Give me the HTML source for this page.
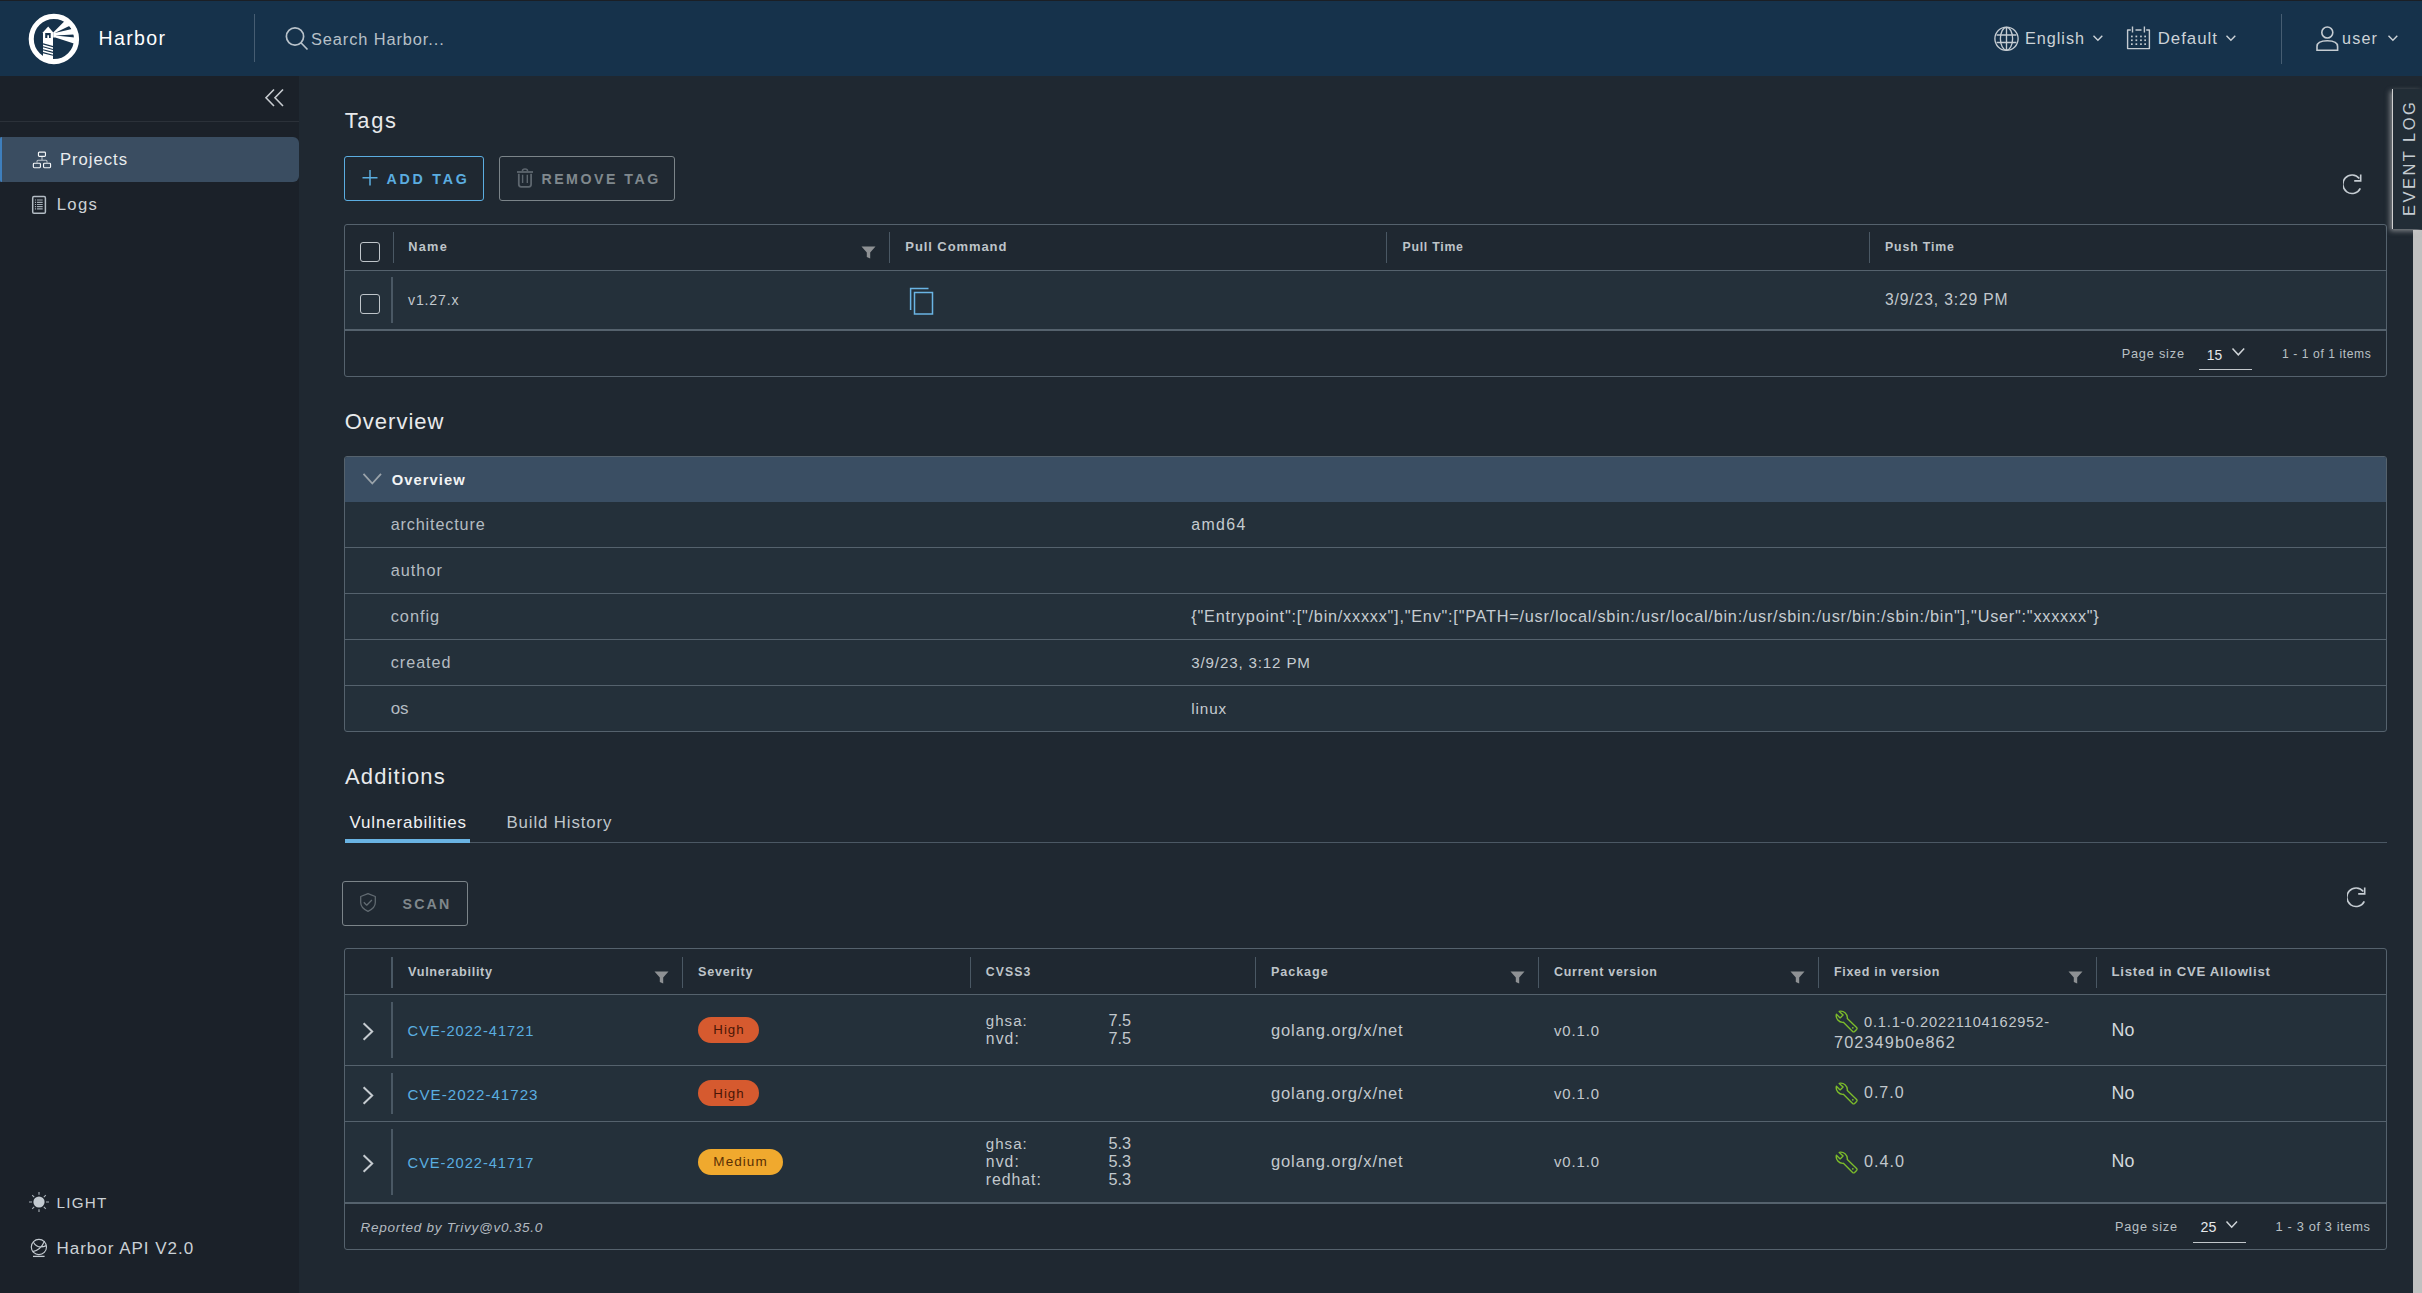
<!DOCTYPE html>
<html><head><meta charset="utf-8"><style>
html,body{margin:0;padding:0;width:2422px;height:1293px;overflow:hidden;background:#1f2831;}
body{position:relative;font-family:"Liberation Sans",sans-serif;}
.t{position:absolute;white-space:nowrap;line-height:1;}
.r{position:absolute;}
</style></head><body>
<div class="r" style="left:0px;top:0px;width:2422px;height:1293px;background:#1f2831"></div>
<div class="r" style="left:0px;top:0px;width:2422px;height:1px;background:#1b1f25"></div>
<div class="r" style="left:0px;top:1px;width:2422px;height:75px;background:#16324b"></div>
<div class="r" style="left:0px;top:76px;width:299px;height:1217px;background:#1b2129"></div>
<svg class="r" style="left:28px;top:13px;" width="52" height="52" viewBox="0 0 52 52"><defs><clipPath id="lc"><circle cx="25.9" cy="26" r="23"/></clipPath></defs>
<g clip-path="url(#lc)">
<path d="M25.2 19.5 L46.1 -1.4 L72 -1 L64.5 36.3 L27.3 24.5 L25.2 24.5 Z" fill="#fff"/>
<path d="M26.7 20 L41.3 12.9 L43.9 16 Z" fill="#16324b"/>
<path d="M27.3 22.6 L45.6 21.5 L46.7 24.6 Z" fill="#16324b"/>
<path d="M15 46 L15 19.2 L20.2 13.6 L25 19.2 L25 52 Z" fill="#fff"/>
<path d="M17.2 25 V20.1 H22.7 V25 H21 V22.2 H19.3 V25 Z" fill="#16324b"/>
<path d="M15 30.9 L25 33.6 M15 33.8 L25 36.5 M15 36.7 L25 39.4 M15 39.6 L25 42.3" stroke="#16324b" stroke-width="1.1"/>
</g>
<circle cx="25.9" cy="26" r="22.65" fill="none" stroke="#fff" stroke-width="5.1"/>
</svg>
<div class="t" style="left:98.50px;top:29.00px;font-size:19.56px;color:#ffffff;letter-spacing:1.33px;">Harbor</div>
<div class="r" style="left:254px;top:14px;width:1px;height:48px;background:#465d72"></div>
<svg class="r" style="left:284px;top:26px;" width="26" height="26" viewBox="0 0 26 26"><circle cx="11" cy="10.5" r="8.6" fill="none" stroke="#b8c2ca" stroke-width="1.7"/><path d="M17.2 17 L23.5 23.5" stroke="#b8c2ca" stroke-width="1.7"/></svg>
<div class="t" style="left:311.00px;top:31.00px;font-size:16.41px;color:#b7c0c8;letter-spacing:0.885px;">Search Harbor...</div>
<svg class="r" style="left:1993px;top:25px;" width="27" height="27" viewBox="0 0 27 27"><g fill="none" stroke="#c5ccd2" stroke-width="1.35">
<circle cx="13.5" cy="13.7" r="11.6"/>
<ellipse cx="13.5" cy="13.7" rx="6.1" ry="11.4"/>
<path d="M13.5 2.2 V25.2 M3.6 10 H23.4 M3.6 17.5 H23.4"/></g></svg>
<div class="t" style="left:2025.00px;top:30.00px;font-size:16.19px;color:#cdd3d8;letter-spacing:0.983px;">English</div>
<svg class="r" style="left:2092px;top:34px;" width="12" height="8" viewBox="0 0 12 8"><path d="M1.5 1.8 L5.9 6.2 L10.3 1.8" fill="none" stroke="#cdd3d8" stroke-width="1.4"/></svg>
<svg class="r" style="left:2125px;top:25px;" width="28" height="27" viewBox="0 0 28 27"><g fill="none" stroke="#c5ccd2" stroke-width="1.4">
<path d="M5.8 5 H2.6 V23.6 H24.4 V5 H21.2 M10.5 5 H16.5" stroke-linejoin="round"/>
<path d="M7.5 1.6 V7.5 M19.4 1.6 V7.5"/></g>
<g fill="#c5ccd2"><rect x="6.0" y="10.6" width="1.7" height="1.7"/><rect x="10.5" y="10.6" width="1.7" height="1.7"/><rect x="15.1" y="10.6" width="1.7" height="1.7"/><rect x="19.3" y="10.6" width="1.7" height="1.7"/><rect x="6.0" y="14.399999999999999" width="1.7" height="1.7"/><rect x="10.5" y="14.399999999999999" width="1.7" height="1.7"/><rect x="15.1" y="14.399999999999999" width="1.7" height="1.7"/><rect x="19.3" y="14.399999999999999" width="1.7" height="1.7"/><rect x="6.0" y="18.3" width="1.7" height="1.7"/><rect x="10.5" y="18.3" width="1.7" height="1.7"/><rect x="15.1" y="18.3" width="1.7" height="1.7"/><rect x="19.3" y="18.3" width="1.7" height="1.7"/></g></svg>
<div class="t" style="left:2157.70px;top:31.00px;font-size:16.84px;color:#cdd3d8;letter-spacing:0.988px;">Default</div>
<svg class="r" style="left:2225px;top:34px;" width="12" height="8" viewBox="0 0 12 8"><path d="M1.5 1.8 L5.9 6.2 L10.3 1.8" fill="none" stroke="#cdd3d8" stroke-width="1.4"/></svg>
<div class="r" style="left:2281px;top:14px;width:1px;height:50px;background:#465d72"></div>
<svg class="r" style="left:2315px;top:26px;" width="25" height="26" viewBox="0 0 25 26"><g fill="none" stroke="#c5ccd2" stroke-width="1.6">
<circle cx="12.3" cy="6.5" r="5.5"/>
<path d="M2 24.3 V20.5 Q2 14.8 12.3 14.8 Q22.6 14.8 22.6 20.5 V24.3 Z"/></g></svg>
<div class="t" style="left:2342.00px;top:30.00px;font-size:16.15px;color:#cdd3d8;letter-spacing:1.167px;">user</div>
<svg class="r" style="left:2387px;top:34px;" width="12" height="8" viewBox="0 0 12 8"><path d="M1.5 1.8 L5.9 6.2 L10.3 1.8" fill="none" stroke="#cdd3d8" stroke-width="1.4"/></svg>
<svg class="r" style="left:264px;top:88px;" width="22" height="20" viewBox="0 0 22 20"><path d="M10 1.5 L2 9.8 L10 18 M19 1.5 L11 9.8 L19 18" fill="none" stroke="#c8ccd0" stroke-width="1.6"/></svg>
<div class="r" style="left:0px;top:121px;width:299px;height:1px;background:#2b3139"></div>
<div class="r" style="left:0px;top:137px;width:299px;height:45px;background:#3a4d61;border-radius:0 6px 6px 0;"></div>
<div class="r" style="left:0px;top:137px;width:2px;height:45px;background:#3e7fbd;border-radius:2px 0 0 2px;"></div>
<svg class="r" style="left:32px;top:151px;" width="20" height="18" viewBox="0 0 20 18"><g fill="none" stroke="#f4f6f8" stroke-width="1.15">
<rect x="6.45" y="1.15" width="7" height="4.2" rx="0.9"/>
<rect x="1.35" y="12.25" width="7.1" height="4.5" rx="0.9"/><rect x="11.55" y="12.25" width="7" height="4.5" rx="0.9"/></g>
<path d="M10 5.9 V9.2 M5 11.7 V10.3 Q5 9.2 6.1 9.2 H13.9 Q15 9.2 15 10.3 V11.7" fill="none" stroke="#b9c1c9" stroke-width="1.05"/></svg>
<div class="t" style="left:60.00px;top:152.00px;font-size:16.70px;color:#e9ecef;letter-spacing:0.957px;">Projects</div>
<svg class="r" style="left:31px;top:195px;" width="17" height="21" viewBox="0 0 17 21"><rect x="1.7" y="1.6" width="12.7" height="16.7" rx="1.3" fill="none" stroke="#b3bcc4" stroke-width="1.5"/>
<path d="M3.9 5 H5.1 M6 5 H11.7 M3.9 7.4 H5.1 M6 7.4 H11.7 M3.9 9.5 H5.1 M6 9.5 H11.7 M3.9 11.6 H5.1 M6 11.6 H11.7 M3.9 13.8 H5.1 M6 13.8 H11.7" stroke="#a3adb5" stroke-width="1.15"/></svg>
<div class="t" style="left:56.70px;top:197.00px;font-size:16.67px;color:#cdd2d6;letter-spacing:1.34px;">Logs</div>
<svg class="r" style="left:28px;top:1191.4px;" width="22" height="22" viewBox="0 0 22 22"><circle cx="11" cy="11" r="5.6" fill="#c3cad0"/>
<g stroke="#aab2b9" stroke-width="1.1"><path d="M11 1 V3.8 M11 18.2 V21 M1 11 H4 M18 11 H21 M4.2 4.2 L6.2 6.2 M15.8 15.8 L17.8 17.8 M4.2 17.8 L6.2 15.8 M15.8 6.2 L17.8 4.2"/></g></svg>
<div class="t" style="left:56.50px;top:1195.00px;font-size:15.24px;color:#cbd1d6;letter-spacing:1.245px;">LIGHT</div>
<svg class="r" style="left:29px;top:1237px;" width="20" height="22" viewBox="0 0 20 22"><g fill="none" stroke="#c3cad0" stroke-width="1.15">
<circle cx="9.9" cy="10" r="7.6"/>
<path d="M4.4 5.2 Q8.5 12.5 17.4 8.6 M3.5 14.6 Q11.5 13.5 15.6 4"/>
<path d="M4 19.4 H15.6" stroke-width="1.3"/></g></svg>
<div class="t" style="left:56.50px;top:1240.00px;font-size:17.02px;color:#cbd1d6;letter-spacing:0.976px;">Harbor API V2.0</div>
<div class="t" style="left:344.80px;top:110.00px;font-size:21.80px;color:#e8eaec;letter-spacing:1.667px;">Tags</div>
<div class="r" style="left:344px;top:156px;width:140px;height:45px;box-sizing:border-box;border:1px solid #5bade0;border-radius:3px;"></div>
<svg class="r" style="left:361px;top:169px;" width="18" height="18" viewBox="0 0 18 18"><path d="M9 1 V16.5 M1.5 8.8 H16.5" stroke="#5bade0" stroke-width="1.5"/></svg>
<div class="t" style="left:386.60px;top:172.00px;font-size:14.20px;color:#5bade0;font-weight:700;letter-spacing:2.75px;">ADD TAG</div>
<div class="r" style="left:499px;top:156px;width:176px;height:45px;box-sizing:border-box;border:1px solid #7b8489;border-radius:3px;"></div>
<svg class="r" style="left:516px;top:167px;" width="18" height="21" viewBox="0 0 18 21"><g fill="none" stroke="#5d666e" stroke-linecap="butt">
<path d="M1 5 H17" stroke-width="1.8"/><path d="M6.4 4.2 A2.6 2.1 0 0 1 11.6 4.2" stroke-width="1.5"/>
<path d="M2.8 6.8 V17.3 Q2.8 19.8 5.2 19.8 H12.8 Q15.1 19.8 15.1 17.3 V6.8" stroke-width="1.8"/>
<path d="M6.6 7.8 V16 M11.3 7.8 V16" stroke-width="1.4"/></g></svg>
<div class="t" style="left:541.40px;top:172.00px;font-size:14.20px;color:#80898e;font-weight:700;letter-spacing:2.5px;">REMOVE TAG</div>
<svg class="r" style="left:2343px;top:174px;" width="22" height="22" viewBox="0 0 22 22"><path d="M17.3 14.3 A9.2 9.2 0 1 1 16.3 4.6" fill="none" stroke="#c5ccd2" stroke-width="1.6"/><path d="M17.7 0.4 V6.9 H11.2" fill="none" stroke="#c5ccd2" stroke-width="1.6"/></svg>
<div class="r" style="left:344px;top:224px;width:2043px;height:153px;box-sizing:border-box;border:1px solid #55626d;border-radius:3px;"></div>
<div class="r" style="left:345px;top:270px;width:2041px;height:1px;background:#55626d"></div>
<div class="r" style="left:345px;top:271px;width:2041px;height:58px;background:#24303a"></div>
<div class="r" style="left:345px;top:329px;width:2041px;height:2px;background:#55626d"></div>
<div class="r" style="left:360px;top:242px;width:20px;height:20px;box-sizing:border-box;border:1.4px solid #bfc5ca;border-radius:3px;"></div>
<div class="r" style="left:393px;top:232px;width:1px;height:31px;background:#4a5864"></div>
<div class="t" style="left:408.20px;top:241.00px;font-size:12.74px;color:#bec4c9;font-weight:700;letter-spacing:1.283px;">Name</div>
<svg class="r" style="left:861px;top:245.5px;" width="15" height="13" viewBox="0 0 15 13"><path d="M0.5 0.5 H14.5 L9.2 6.6 V12.5 L5.8 11 V6.6 Z" fill="#8e9194"/></svg>
<div class="r" style="left:889px;top:232px;width:1px;height:31px;background:#4a5864"></div>
<div class="t" style="left:905.30px;top:240.00px;font-size:13.01px;color:#bec4c9;font-weight:700;letter-spacing:0.92px;">Pull Command</div>
<div class="r" style="left:1386px;top:232px;width:1px;height:31px;background:#4a5864"></div>
<div class="t" style="left:1402.50px;top:241.00px;font-size:12.29px;color:#bec4c9;font-weight:700;letter-spacing:0.756px;">Pull Time</div>
<div class="r" style="left:1869px;top:232px;width:1px;height:31px;background:#4a5864"></div>
<div class="t" style="left:1885.00px;top:241.00px;font-size:12.32px;color:#bec4c9;font-weight:700;letter-spacing:0.862px;">Push Time</div>
<div class="r" style="left:360px;top:294px;width:20px;height:20px;box-sizing:border-box;border:1.4px solid #bfc5ca;border-radius:3px;"></div>
<div class="r" style="left:391px;top:277px;width:2px;height:46px;background:#4a5864"></div>
<div class="t" style="left:408.00px;top:293.00px;font-size:14.14px;color:#c2c8cd;letter-spacing:0.843px;">v1.27.x</div>
<svg class="r" style="left:909px;top:287px;" width="26" height="29" viewBox="0 0 26 29"><g fill="none" stroke="#6ab4e4" stroke-width="1.5">
<path d="M1.6 23 V1.6 H19.5"/><rect x="5.5" y="5.5" width="18" height="21.5"/></g></svg>
<div class="t" style="left:1885.00px;top:292.00px;font-size:15.64px;color:#c2c8cd;letter-spacing:0.876px;">3/9/23, 3:29 PM</div>
<div class="t" style="left:2121.70px;top:348.00px;font-size:12.77px;color:#b9c0c5;letter-spacing:0.779px;">Page size</div>
<div class="t" style="left:2206.80px;top:349.00px;font-size:13.80px;color:#e6e9eb;">15</div>
<svg class="r" style="left:2231px;top:347px;" width="15" height="10" viewBox="0 0 15 10"><path d="M1.5 1.5 L7.3 7.8 L13.2 1.5" fill="none" stroke="#cfd4d8" stroke-width="1.5"/></svg>
<div class="r" style="left:2199px;top:368.5px;width:53px;height:1.6px;background:#c2c7cb"></div>
<div class="t" style="left:2282.00px;top:348.00px;font-size:12.08px;color:#b9c0c5;letter-spacing:0.591px;">1 - 1 of 1 items</div>
<div class="t" style="left:344.70px;top:411.00px;font-size:22.00px;color:#e8eaec;letter-spacing:1.006px;">Overview</div>
<div class="r" style="left:344px;top:456px;width:2043px;height:276px;box-sizing:border-box;border:1px solid #55626d;border-radius:3px;background:#24303a;"></div>
<div class="r" style="left:345px;top:457px;width:2041px;height:45px;background:#3a4e63;border-radius:2px 2px 0 0;"></div>
<svg class="r" style="left:362px;top:472px;" width="21" height="14" viewBox="0 0 21 14"><path d="M1.5 1.8 L10.3 11.5 L19 1.8" fill="none" stroke="#9aa3aa" stroke-width="1.8"/></svg>
<div class="t" style="left:391.70px;top:473.00px;font-size:14.78px;color:#f2f4f5;font-weight:700;letter-spacing:1.044px;">Overview</div>
<div class="t" style="left:390.70px;top:516.00px;font-size:16.19px;color:#b4bcc2;letter-spacing:0.854px;">architecture</div>
<div class="t" style="left:1191.30px;top:517.00px;font-size:15.88px;color:#c6ccd1;letter-spacing:1.35px;">amd64</div>
<div class="t" style="left:390.70px;top:562.00px;font-size:16.26px;color:#b4bcc2;letter-spacing:1.026px;">author</div>
<div class="r" style="left:345px;top:547px;width:2041px;height:1px;background:#55626d"></div>
<div class="t" style="left:390.70px;top:608.00px;font-size:16.35px;color:#b4bcc2;letter-spacing:0.97px;">config</div>
<div class="t" style="left:1191.30px;top:608.00px;font-size:16.30px;color:#c6ccd1;letter-spacing:0.757px;">{"Entrypoint":["/bin/xxxxx"],"Env":["PATH=/usr/local/sbin:/usr/local/bin:/usr/sbin:/usr/bin:/sbin:/bin"],"User":"xxxxxx"}</div>
<div class="r" style="left:345px;top:593px;width:2041px;height:1px;background:#55626d"></div>
<div class="t" style="left:390.70px;top:654.00px;font-size:16.17px;color:#b4bcc2;letter-spacing:1.0px;">created</div>
<div class="t" style="left:1191.30px;top:655.00px;font-size:15.13px;color:#c6ccd1;letter-spacing:0.848px;">3/9/23, 3:12 PM</div>
<div class="r" style="left:345px;top:639px;width:2041px;height:1px;background:#55626d"></div>
<div class="t" style="left:390.70px;top:700.00px;font-size:16.98px;color:#b4bcc2;">os</div>
<div class="t" style="left:1191.30px;top:701.00px;font-size:15.29px;color:#c6ccd1;letter-spacing:0.875px;">linux</div>
<div class="r" style="left:345px;top:685px;width:2041px;height:1px;background:#55626d"></div>
<div class="t" style="left:345.00px;top:766.00px;font-size:22.00px;color:#e8eaec;letter-spacing:1.147px;">Additions</div>
<div class="t" style="left:349.50px;top:815.00px;font-size:16.97px;color:#f0f2f4;letter-spacing:0.834px;">Vulnerabilities</div>
<div class="t" style="left:506.50px;top:815.00px;font-size:16.83px;color:#bfc6cb;letter-spacing:0.874px;">Build History</div>
<div class="r" style="left:345px;top:842px;width:2042px;height:1px;background:#4b5864"></div>
<div class="r" style="left:345px;top:839px;width:125px;height:4px;background:#69b3e3"></div>
<div class="r" style="left:342px;top:881px;width:126px;height:45px;box-sizing:border-box;border:1px solid #7b8489;border-radius:3px;"></div>
<svg class="r" style="left:358px;top:892px;" width="20" height="21" viewBox="0 0 20 21"><g fill="none" stroke="#626b72" stroke-width="1.25" stroke-linejoin="round">
<path d="M10 1.6 L2.7 4.5 V10.6 Q2.7 16.2 10 19.4 Q17.3 16.2 17.3 10.6 V4.5 Z"/>
<path d="M5.8 10.3 L8.7 13.2 L13.9 8"/></g></svg>
<div class="t" style="left:402.50px;top:897.00px;font-size:14.20px;color:#7f878c;font-weight:700;letter-spacing:2.2px;">SCAN</div>
<svg class="r" style="left:2347px;top:887px;" width="22" height="22" viewBox="0 0 22 22"><path d="M17.3 14.3 A9.2 9.2 0 1 1 16.3 4.6" fill="none" stroke="#c5ccd2" stroke-width="1.6"/><path d="M17.7 0.4 V6.9 H11.2" fill="none" stroke="#c5ccd2" stroke-width="1.6"/></svg>
<div class="r" style="left:344px;top:948px;width:2043px;height:302px;box-sizing:border-box;border:1px solid #55626d;border-radius:3px;"></div>
<div class="r" style="left:345px;top:994px;width:2041px;height:1px;background:#55626d"></div>
<div class="r" style="left:345px;top:995px;width:2041px;height:207px;background:#24303a"></div>
<div class="r" style="left:345px;top:1065px;width:2041px;height:1px;background:#55626d"></div>
<div class="r" style="left:345px;top:1121px;width:2041px;height:1px;background:#55626d"></div>
<div class="r" style="left:345px;top:1202px;width:2041px;height:2px;background:#55626d"></div>
<div class="r" style="left:391px;top:957px;width:2px;height:31px;background:#4a5864"></div>
<div class="r" style="left:682px;top:957px;width:1px;height:31px;background:#4a5864"></div>
<div class="r" style="left:970px;top:957px;width:1px;height:31px;background:#4a5864"></div>
<div class="r" style="left:1255px;top:957px;width:1px;height:31px;background:#4a5864"></div>
<div class="r" style="left:1538px;top:957px;width:1px;height:31px;background:#4a5864"></div>
<div class="r" style="left:1818px;top:957px;width:1px;height:31px;background:#4a5864"></div>
<div class="r" style="left:2096px;top:957px;width:1px;height:31px;background:#4a5864"></div>
<div class="t" style="left:408.00px;top:966.00px;font-size:12.69px;color:#bec4c9;font-weight:700;letter-spacing:0.702px;">Vulnerability</div>
<div class="t" style="left:698.00px;top:966.00px;font-size:12.62px;color:#bec4c9;font-weight:700;letter-spacing:0.781px;">Severity</div>
<div class="t" style="left:985.70px;top:966.00px;font-size:12.24px;color:#bec4c9;font-weight:700;letter-spacing:1.115px;">CVSS3</div>
<div class="t" style="left:1271.00px;top:966.00px;font-size:12.57px;color:#bec4c9;font-weight:700;letter-spacing:0.945px;">Package</div>
<div class="t" style="left:1554.00px;top:966.00px;font-size:12.44px;color:#bec4c9;font-weight:700;letter-spacing:0.736px;">Current version</div>
<div class="t" style="left:1834.00px;top:966.00px;font-size:12.48px;color:#bec4c9;font-weight:700;letter-spacing:0.703px;">Fixed in version</div>
<div class="t" style="left:2111.60px;top:965.00px;font-size:13.20px;color:#bec4c9;font-weight:700;letter-spacing:0.72px;">Listed in CVE Allowlist</div>
<svg class="r" style="left:654px;top:970.5px;" width="15" height="13" viewBox="0 0 15 13"><path d="M0.5 0.5 H14.5 L9.2 6.6 V12.5 L5.8 11 V6.6 Z" fill="#8e9194"/></svg>
<svg class="r" style="left:1510px;top:970.5px;" width="15" height="13" viewBox="0 0 15 13"><path d="M0.5 0.5 H14.5 L9.2 6.6 V12.5 L5.8 11 V6.6 Z" fill="#8e9194"/></svg>
<svg class="r" style="left:1790px;top:970.5px;" width="15" height="13" viewBox="0 0 15 13"><path d="M0.5 0.5 H14.5 L9.2 6.6 V12.5 L5.8 11 V6.6 Z" fill="#8e9194"/></svg>
<svg class="r" style="left:2068px;top:970.5px;" width="15" height="13" viewBox="0 0 15 13"><path d="M0.5 0.5 H14.5 L9.2 6.6 V12.5 L5.8 11 V6.6 Z" fill="#8e9194"/></svg>
<svg class="r" style="left:362px;top:1022.0px;" width="13" height="20" viewBox="0 0 13 20"><path d="M1.6 1.2 L10.2 9.5 L1.6 17.8" fill="none" stroke="#c5cbd0" stroke-width="2"/></svg>
<div class="r" style="left:391px;top:1002px;width:2px;height:56px;background:#4a5864"></div>
<div class="t" style="left:407.60px;top:1024.00px;font-size:14.66px;color:#5aaee0;letter-spacing:0.968px;">CVE-2022-41721</div>
<div class="r" style="left:698px;top:1017px;width:61px;height:26px;background:#d65a2f;border-radius:13px;"></div>
<div class="t" style="left:713.30px;top:1023.00px;font-size:13.28px;color:#4a1606;letter-spacing:1.013px;">High</div>
<div class="t" style="left:985.80px;top:1013.00px;font-size:15.06px;color:#c2c8cd;letter-spacing:1.025px;">ghsa:</div>
<div class="t" style="left:1108.50px;top:1012.00px;font-size:16.26px;color:#c2c8cd;">7.5</div>
<div class="t" style="left:985.80px;top:1031.00px;font-size:15.71px;color:#c2c8cd;letter-spacing:1.1px;">nvd:</div>
<div class="t" style="left:1108.50px;top:1030.00px;font-size:16.26px;color:#c2c8cd;">7.5</div>
<div class="t" style="left:1271.00px;top:1023.00px;font-size:16.52px;color:#c2c8cd;letter-spacing:0.877px;">golang.org/x/net</div>
<div class="t" style="left:1554.00px;top:1024.00px;font-size:14.89px;color:#c2c8cd;letter-spacing:0.9px;">v0.1.0</div>
<div class="t" style="left:2111.60px;top:1022.00px;font-size:17.81px;color:#d3d8dc;">No</div>
<svg class="r" style="left:362px;top:1085.5px;" width="13" height="20" viewBox="0 0 13 20"><path d="M1.6 1.2 L10.2 9.5 L1.6 17.8" fill="none" stroke="#c5cbd0" stroke-width="2"/></svg>
<div class="r" style="left:391px;top:1073px;width:2px;height:41px;background:#4a5864"></div>
<div class="t" style="left:407.60px;top:1087.00px;font-size:15.14px;color:#5aaee0;letter-spacing:1.0px;">CVE-2022-41723</div>
<div class="r" style="left:698px;top:1080px;width:61px;height:26px;background:#d65a2f;border-radius:13px;"></div>
<div class="t" style="left:713.30px;top:1087.00px;font-size:13.28px;color:#4a1606;letter-spacing:1.013px;">High</div>
<div class="t" style="left:1271.00px;top:1086.00px;font-size:16.52px;color:#c2c8cd;letter-spacing:0.877px;">golang.org/x/net</div>
<div class="t" style="left:1554.00px;top:1087.00px;font-size:14.89px;color:#c2c8cd;letter-spacing:0.9px;">v0.1.0</div>
<div class="t" style="left:2111.60px;top:1085.00px;font-size:17.81px;color:#d3d8dc;">No</div>
<svg class="r" style="left:362px;top:1154.0px;" width="13" height="20" viewBox="0 0 13 20"><path d="M1.6 1.2 L10.2 9.5 L1.6 17.8" fill="none" stroke="#c5cbd0" stroke-width="2"/></svg>
<div class="r" style="left:391px;top:1129px;width:2px;height:66px;background:#4a5864"></div>
<div class="t" style="left:407.60px;top:1156.00px;font-size:14.65px;color:#5aaee0;letter-spacing:0.968px;">CVE-2022-41717</div>
<div class="r" style="left:698px;top:1149.0px;width:85px;height:26px;background:#f0a92e;border-radius:13px;"></div>
<div class="t" style="left:713.30px;top:1155.00px;font-size:13.53px;color:#5a3004;letter-spacing:1.07px;">Medium</div>
<div class="t" style="left:985.80px;top:1136.00px;font-size:15.06px;color:#c2c8cd;letter-spacing:1.025px;">ghsa:</div>
<div class="t" style="left:1108.50px;top:1135.00px;font-size:16.26px;color:#c2c8cd;">5.3</div>
<div class="t" style="left:985.80px;top:1154.00px;font-size:15.71px;color:#c2c8cd;letter-spacing:1.1px;">nvd:</div>
<div class="t" style="left:1108.50px;top:1153.00px;font-size:16.26px;color:#c2c8cd;">5.3</div>
<div class="t" style="left:985.80px;top:1172.00px;font-size:15.92px;color:#c2c8cd;letter-spacing:0.917px;">redhat:</div>
<div class="t" style="left:1108.50px;top:1171.00px;font-size:16.26px;color:#c2c8cd;">5.3</div>
<div class="t" style="left:1271.00px;top:1154.00px;font-size:16.52px;color:#c2c8cd;letter-spacing:0.877px;">golang.org/x/net</div>
<div class="t" style="left:1554.00px;top:1155.00px;font-size:14.89px;color:#c2c8cd;letter-spacing:0.9px;">v0.1.0</div>
<div class="t" style="left:2111.60px;top:1153.00px;font-size:17.81px;color:#d3d8dc;">No</div>
<svg class="r" style="left:1833px;top:1009px;" width="25" height="24" viewBox="0 0 25 24"><path d="M6.2 2.4 L10.1 6.1 L7.1 8.9 L3.4 5.2 A6.6 6.6 0 0 0 10.4 13.3 L19.6 22.4 Q20.6 23.3 21.6 22.4 L23.6 20.4 Q24.5 19.4 23.6 18.4 L14.3 9.4 A6.6 6.6 0 0 0 6.2 2.4 Z" fill="none" stroke="#7dbd2b" stroke-width="1.35" stroke-linejoin="round"/><circle cx="19.8" cy="18.8" r="0.9" fill="#7dbd2b"/></svg>
<div class="t" style="left:1864.00px;top:1015.00px;font-size:14.57px;color:#c2c8cd;letter-spacing:0.841px;">0.1.1-0.20221104162952-</div>
<div class="t" style="left:1834.00px;top:1034.00px;font-size:16.30px;color:#c2c8cd;letter-spacing:1.098px;">702349b0e862</div>
<svg class="r" style="left:1833px;top:1081px;" width="25" height="24" viewBox="0 0 25 24"><path d="M6.2 2.4 L10.1 6.1 L7.1 8.9 L3.4 5.2 A6.6 6.6 0 0 0 10.4 13.3 L19.6 22.4 Q20.6 23.3 21.6 22.4 L23.6 20.4 Q24.5 19.4 23.6 18.4 L14.3 9.4 A6.6 6.6 0 0 0 6.2 2.4 Z" fill="none" stroke="#7dbd2b" stroke-width="1.35" stroke-linejoin="round"/><circle cx="19.8" cy="18.8" r="0.9" fill="#7dbd2b"/></svg>
<div class="t" style="left:1864.00px;top:1085.00px;font-size:16.01px;color:#c2c8cd;letter-spacing:0.988px;">0.7.0</div>
<svg class="r" style="left:1833px;top:1150px;" width="25" height="24" viewBox="0 0 25 24"><path d="M6.2 2.4 L10.1 6.1 L7.1 8.9 L3.4 5.2 A6.6 6.6 0 0 0 10.4 13.3 L19.6 22.4 Q20.6 23.3 21.6 22.4 L23.6 20.4 Q24.5 19.4 23.6 18.4 L14.3 9.4 A6.6 6.6 0 0 0 6.2 2.4 Z" fill="none" stroke="#7dbd2b" stroke-width="1.35" stroke-linejoin="round"/><circle cx="19.8" cy="18.8" r="0.9" fill="#7dbd2b"/></svg>
<div class="t" style="left:1864.00px;top:1153.00px;font-size:16.22px;color:#c2c8cd;letter-spacing:1.0px;">0.4.0</div>
<div class="t" style="left:360.40px;top:1221.00px;font-size:13.53px;color:#b3bac0;font-style:italic;letter-spacing:0.758px;">Reported by Trivy@v0.35.0</div>
<div class="t" style="left:2115.00px;top:1221.00px;font-size:12.71px;color:#b9c0c5;letter-spacing:0.775px;">Page size</div>
<div class="t" style="left:2200.50px;top:1220.00px;font-size:14.20px;color:#e6e9eb;">25</div>
<svg class="r" style="left:2225px;top:1220px;" width="15" height="10" viewBox="0 0 15 10"><path d="M1.5 1.5 L6.7 7.2 L12 1.5" fill="none" stroke="#cfd4d8" stroke-width="1.5"/></svg>
<div class="r" style="left:2193px;top:1241.5px;width:53px;height:1.6px;background:#c2c7cb"></div>
<div class="t" style="left:2275.60px;top:1221.00px;font-size:12.85px;color:#b9c0c5;letter-spacing:0.629px;">1 - 3 of 3 items</div>
<div class="r" style="left:2413px;top:76px;width:9px;height:1217px;background:#1f2831"></div>
<div class="r" style="left:2413px;top:230px;width:9px;height:1063px;background:#c1c1c1"></div>
<div class="r" style="left:2392px;top:89px;width:30px;height:140px;background:#222d36;box-shadow:-2px 2px 5px rgba(210,210,210,0.55);border-left:1px solid #d0d0d0;box-sizing:border-box;"></div>
<div class="t" style="left:2394px;top:89px;width:30px;height:140px;"><div style="position:absolute;left:50%;top:50%;transform:translate(-50%,-50%) rotate(-90deg);font-size:16.5px;letter-spacing:2.45px;color:#c5ccd2;white-space:nowrap;line-height:1;padding-left:2.45px">EVENT LOG</div></div>
</body></html>
